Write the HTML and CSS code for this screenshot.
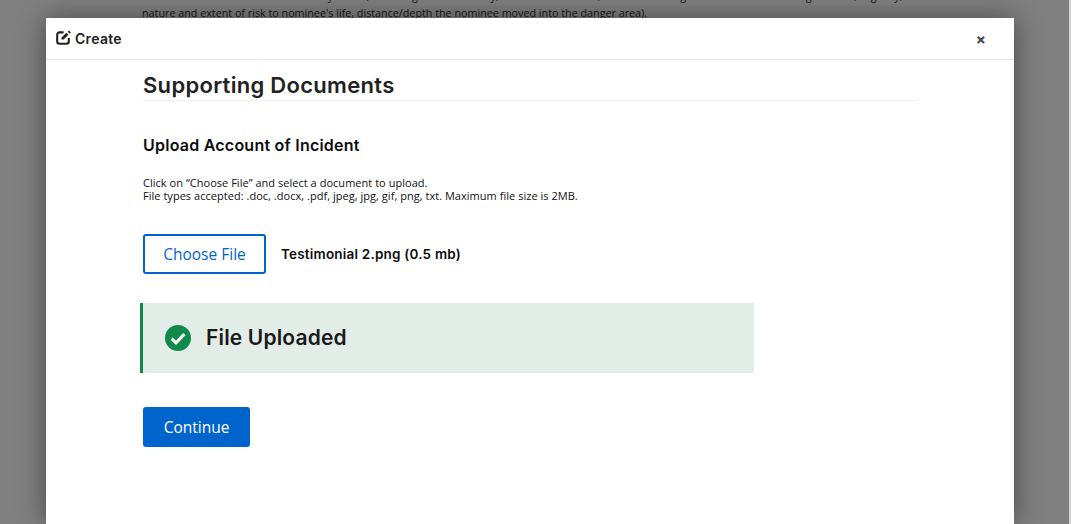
FILE: index.html

```html
<!DOCTYPE html>
<html lang="en">
<head>
  <meta charset="UTF-8">
  <title>Create</title>
  <link rel="stylesheet" href="styles.css">
</head>
<body>

  <!-- page behind the overlay -->
  <div class="page-behind">
    <p>Describe the incident in detail where you can, including the time of day, weather conditions, the level of danger involved and how long it lasted, urgency,</p>
    <p>nature and extent of risk to nominee's life, distance/depth the nominee moved into the danger area).</p>
  </div>

  <div class="overlay">
    <div class="modal">
      <div class="modal-header">
        <div class="modal-title">
          <svg class="edit-icon" width="16" height="15" viewBox="0 0 16 15">
            <path d="M7.6 2.4H3.4A2.2 2.2 0 0 0 1.2 4.6v7a2.2 2.2 0 0 0 2.2 2.2h7.2a2.2 2.2 0 0 0 2.2-2.2V8" fill="none" stroke="#222" stroke-width="2.1"/>
            <path d="M5.4 9.8l.5-2.5 4.5-4.5 2 2-4.5 4.5z" fill="#222"/>
            <path d="M13 .6l1.9 1.9-1.2 1.2-1.9-1.9z" fill="#222"/>
          </svg>
          <span>Create</span>
        </div>
        <span class="close">×</span>
      </div>

      <div class="modal-body">
        <h1>Supporting Documents</h1>
        <h2>Upload Account of Incident</h2>
        <p class="help">Click on “Choose File” and select a document to upload.<br>File types accepted: .doc, .docx, .pdf, jpeg, jpg, gif, png, txt. Maximum file size is 2MB.</p>

        <div class="file-row">
          <button class="btn-outline">Choose File</button>
          <span class="file-name">Testimonial 2.png (0.5 mb)</span>
        </div>

        <div class="alert">
          <svg width="26" height="26" viewBox="0 0 26 26">
            <circle cx="13" cy="13" r="13" fill="#0f8a4b"/>
            <path d="M6.6 13.6l4.4 4.3 8.4-8.8" fill="none" stroke="#fff" stroke-width="3"/>
          </svg>
          <span class="alert-text">File Uploaded</span>
        </div>

        <button class="btn-primary">Continue</button>
      </div>
    </div>
  </div>

  <div class="scrollbar"></div>

</body>
</html>
```

FILE: styles.css

```css
html, body {
  margin: 0;
  height: 524px;
  overflow: hidden;
}

body {
  display: flex;
  background-color: #808080;
  font-family: 'Open Sans', sans-serif;
  color: #111;
}

.page-behind {
  position: absolute;
  top: -12px;
  left: 142px;
  width: 800px;
  color: #161616;
  font-size: 10.75px;
  line-height: 17px;
}

.page-behind p {
  margin: 0;
  white-space: nowrap;
}

.overlay {
  position: relative;
  flex: 1;
  padding: 18px 55px 0 46px;
}

.scrollbar {
  width: 9px;
  background-color: white;
  border-left: 2px solid #d4d4d4;
}

.modal {
  width: 968px;
  height: 506px;
  background-color: white;
  box-shadow: 0 0 26px rgba(0,0,0,0.45);
}

.modal-header {
  display: flex;
  justify-content: space-between;
  align-items: center;
  height: 41px;
  padding: 0 28px 0 10px;
  border-bottom: 1px solid #e6e6e6;
}

.modal-title {
  display: flex;
  align-items: center;
  gap: 3px;
  font-family: 'Inter', sans-serif;
  font-size: 14px;
  font-weight: 600;
  letter-spacing: 0.3px;
  color: #222;
}

.edit-icon {
  margin-top: -3px;
}

.close {
  margin-top: 2px;
  font-family: 'Inter', sans-serif;
  font-size: 15px;
  font-weight: 700;
  color: #444;
}

.modal-body {
  padding: 11px 96px 0 97px;
}

h1 {
  margin: 0 0 32px;
  padding-bottom: 1px;
  border-bottom: 1px solid #f0f0f0;
  font-family: 'Inter', sans-serif;
  font-size: 22px;
  line-height: 28px;
  font-weight: 600;
  letter-spacing: 0.3px;
  color: #222;
}

h2 {
  margin: 0 0 19px;
  font-family: 'Inter', sans-serif;
  font-size: 16px;
  line-height: 24px;
  font-weight: 600;
  letter-spacing: 0.23px;
  color: #0c0c0c;
}

.help {
  margin: 0 0 32px;
  font-size: 11px;
  line-height: 13px;
  letter-spacing: 0.03px;
  color: #111;
}

.file-row {
  display: flex;
  align-items: center;
  gap: 15px;
  margin-bottom: 29px;
}

.btn-outline {
  width: 123px;
  height: 40px;
  padding: 0;
  background-color: white;
  border: 2px solid #0064cd;
  border-radius: 3px;
  color: #0064cd;
  font-family: 'Open Sans', sans-serif;
  font-size: 15.5px;
  font-weight: 500;
}

.file-name {
  font-family: 'Inter', sans-serif;
  font-size: 13.5px;
  font-weight: 600;
  letter-spacing: 0.2px;
  color: #0c0c0c;
}

.alert {
  display: flex;
  align-items: center;
  gap: 15px;
  width: 589px;
  height: 70px;
  margin: 0 0 34px -3px;
  padding-left: 22px;
  background-color: #e3ede7;
  border-left: 3px solid #0f8a4b;
  font-family: 'Inter', sans-serif;
  font-size: 21px;
  font-weight: 600;
  letter-spacing: 0.15px;
  color: #1a1a1a;
}

.alert-text {
  margin-top: -2px;
}

.btn-primary {
  display: block;
  width: 107px;
  height: 40px;
  padding: 0;
  background-color: #0064cd;
  border: 0;
  border-radius: 3px;
  color: white;
  font-family: 'Open Sans', sans-serif;
  font-size: 15.5px;
  font-weight: 500;
}
```
